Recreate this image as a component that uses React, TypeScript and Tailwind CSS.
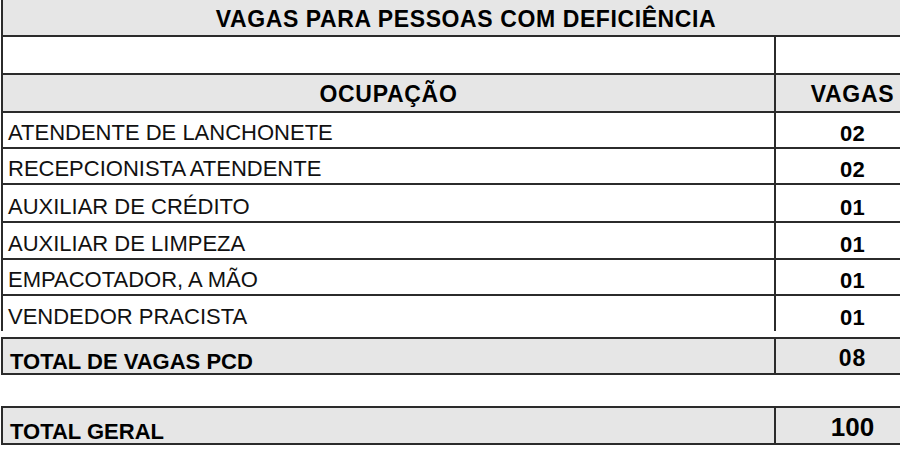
const vagas = [
  { ocupacao: "ATENDENTE DE LANCHONETE", qtd: "02", h: "h-[36px]" },
  { ocupacao: "RECEPCIONISTA ATENDENTE", qtd: "02", h: "h-[36px]" },
  { ocupacao: "AUXILIAR DE CRÉDITO", qtd: "01", h: "h-[38px]" },
  { ocupacao: "AUXILIAR DE LIMPEZA", qtd: "01", h: "h-[37px]" },
  { ocupacao: "EMPACOTADOR, A MÃO", qtd: "01", h: "h-[36px]" },
];

function LinhaVaga({ ocupacao, qtd, h, last = false }: { ocupacao: string; qtd: string; h: string; last?: boolean }) {
  return (
    <div className={`flex ${h} ${last ? "" : "border-b-2"} border-[#2b2b2b]`}>
      <div className="w-[773px] border-l-2 border-[#2b2b2b] flex items-end pl-[5px] pb-[3px] text-[22px] leading-[22px] text-[#111]">
        {ocupacao}
      </div>
      <div className="flex-1 border-l-2 border-[#2b2b2b] flex items-end justify-center pb-[2px] text-[22px] leading-[22px] font-bold tracking-[0.3px]">
        {qtd}
      </div>
    </div>
  );
}

function CaixaTotal({ label, valor, big = false }: { label: string; valor: string; big?: boolean }) {
  return (
    <div className={`flex ${big ? "h-[39px]" : "h-[38px]"} border-y-2 border-[#2b2b2b] bg-[#e6e6e6]`}>
      <div className="w-[773px] border-l-2 border-[#2b2b2b] flex items-end pl-[7px] text-[22px] leading-[22px] font-bold">
        {label}
      </div>
      <div
        className={`flex-1 border-l-2 border-[#2b2b2b] flex items-end justify-center font-bold ${
          big ? "text-[26px] leading-[26px] pb-[3px]" : "text-[23px] leading-[23px] pb-[3px] tracking-[1px]"
        }`}
      >
        {valor}
      </div>
    </div>
  );
}

export default function App() {
  return (
    <div className="w-[900px] h-[450px] overflow-hidden bg-white text-black font-['Liberation_Sans',Arial,sans-serif]">
      <div className="ml-px w-[928px]">
        {/* cabeçalho */}
        <div className="h-[37px] border-l-2 border-b-2 border-[#2b2b2b] bg-[#e6e6e6] flex items-end justify-center pb-[4px] text-[23px] leading-[23px] font-bold tracking-[0.6px]">
          VAGAS PARA PESSOAS COM DEFICIÊNCIA
        </div>
        <div className="flex h-[38px] border-b-2 border-[#2b2b2b]">
          <div className="w-[773px] border-l-2 border-[#2b2b2b]" />
          <div className="flex-1 border-l-2 border-[#2b2b2b]" />
        </div>
        <div className="flex h-[38px] border-b-2 border-[#2b2b2b] bg-[#e6e6e6] text-[23px] leading-[23px] font-bold tracking-[0.7px]">
          <div className="w-[773px] border-l-2 border-[#2b2b2b] flex items-end justify-center pb-[5px]">OCUPAÇÃO</div>
          <div className="flex-1 border-l-2 border-[#2b2b2b] flex items-end justify-center pb-[5px]">VAGAS</div>
        </div>

        {vagas.map((v) => (
          <LinhaVaga key={v.ocupacao} {...v} />
        ))}
        <LinhaVaga ocupacao="VENDEDOR PRACISTA" qtd="01" h="h-[35px]" last />

        <div className="mt-[6px]">
          <CaixaTotal label="TOTAL DE VAGAS PCD" valor="08" />
        </div>
        <div className="mt-[31px]">
          <CaixaTotal label="TOTAL GERAL" valor="100" big />
        </div>
      </div>
    </div>
  );
}
